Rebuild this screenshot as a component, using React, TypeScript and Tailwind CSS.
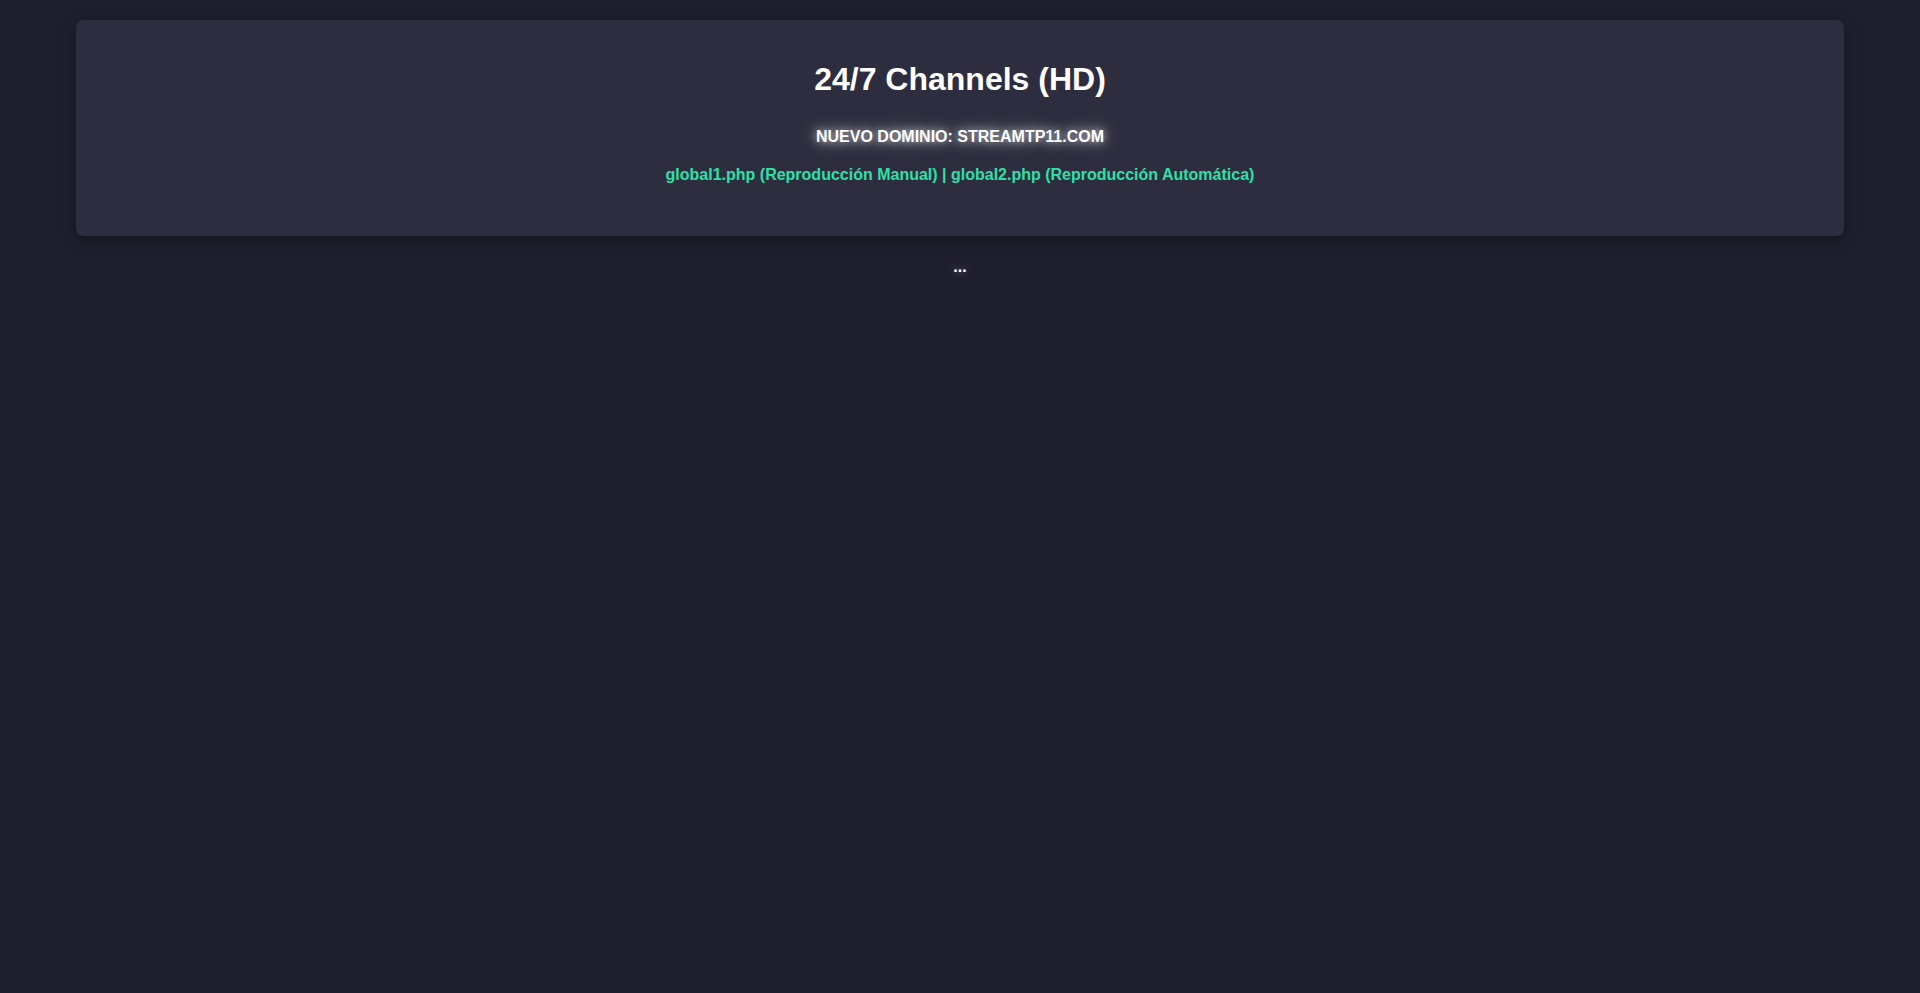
import React from "react";

export default function App() {
  return (
    <div
      className="min-h-[993px] w-full bg-[#1e1e2e] pt-[20px] text-white"
      style={{ fontFamily: '"Liberation Sans", Arial, sans-serif' }}
    >
      <div className="mx-[76px] h-[216px] rounded-[8px] bg-[#2d2d3f] px-[20px] pt-[41px] text-center shadow-[0_4px_16px_rgba(0,0,0,0.35)]">
        <h1 className="text-[32px] font-bold leading-[37px] text-white">24/7 Channels (HD)</h1>
        <p className="mt-[30px] text-[16px] font-bold leading-[18px] text-white [text-shadow:0_0_10px_rgba(255,255,255,0.8),0_0_20px_rgba(255,255,255,0.45)]">
          NUEVO DOMINIO: STREAMTP11.COM
        </p>
        <p className="mt-[20px] text-[16px] font-bold leading-[18px] text-[#2fe0a6]">
          <span>global1.php (Reproducción Manual)</span> | <span>global2.php (Reproducción Automática)</span>
        </p>
      </div>
      <div className="mt-[22px] text-center text-[16px] font-bold leading-[18px] text-white [text-shadow:0_0_8px_rgba(255,255,255,0.6)]">
        ...
      </div>
    </div>
  );
}
